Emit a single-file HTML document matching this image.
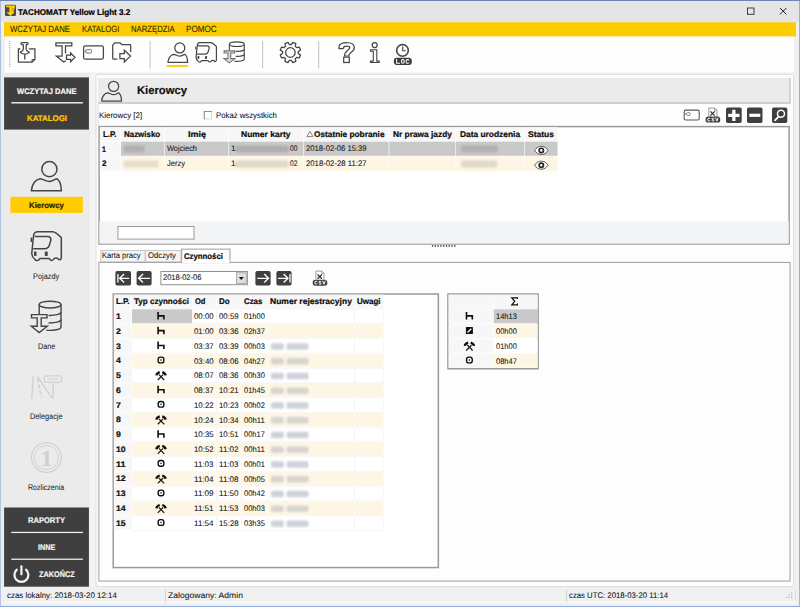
<!DOCTYPE html><html><head><meta charset="utf-8"><title>TACHOMATT Yellow Light 3.2</title><style>
html,body{margin:0;padding:0;}
body{width:800px;height:607px;overflow:hidden;background:#f0f0f0;font-family:"Liberation Sans",sans-serif;font-size:7.8px;color:#111;position:relative;}
.t{position:absolute;white-space:nowrap;line-height:14px;height:14px;-webkit-text-stroke:0.08px currentColor;}
.t.b{font-weight:bold;-webkit-text-stroke:0.22px currentColor;}
svg{position:absolute;overflow:visible;}
#ic,#tx{position:absolute;left:0;top:0;width:800px;height:607px;}

</style></head><body><svg style="left:0;top:0" width="800" height="607" viewBox="0 0 800 607"><rect x="0" y="0" width="800" height="607" fill="#f0f0f0"/><rect x="0" y="0" width="800" height="22.3" fill="#e5e5e5"/><rect x="0" y="0" width="800" height="1" fill="#6a86b8"/><rect x="0" y="1" width="0.9" height="606" fill="#a6bbdf"/><rect x="799.1" y="1" width="0.9" height="606" fill="#8fa9d8"/><rect x="0" y="605.9" width="800" height="1.1" fill="#8fa9d8"/><rect x="4" y="22.3" width="792" height="14.25" fill="#ffcc00"/><rect x="4.8" y="36.55" width="789.2" height="35.5" fill="#fefefe"/><rect x="9.3" y="41" width="1" height="0.95" fill="#8c8c8c"/><rect x="9.3" y="43.08" width="1" height="0.95" fill="#8c8c8c"/><rect x="9.3" y="45.16" width="1" height="0.95" fill="#8c8c8c"/><rect x="9.3" y="47.24" width="1" height="0.95" fill="#8c8c8c"/><rect x="9.3" y="49.32" width="1" height="0.95" fill="#8c8c8c"/><rect x="9.3" y="51.4" width="1" height="0.95" fill="#8c8c8c"/><rect x="9.3" y="53.48" width="1" height="0.95" fill="#8c8c8c"/><rect x="9.3" y="55.56" width="1" height="0.95" fill="#8c8c8c"/><rect x="9.3" y="57.64" width="1" height="0.95" fill="#8c8c8c"/><rect x="9.3" y="59.72" width="1" height="0.95" fill="#8c8c8c"/><rect x="9.3" y="61.8" width="1" height="0.95" fill="#8c8c8c"/><rect x="9.3" y="63.88" width="1" height="0.95" fill="#8c8c8c"/><rect x="9.3" y="65.96" width="1" height="0.95" fill="#8c8c8c"/><rect x="149.55" y="41" width="1.1" height="27.5" fill="#c6c6c6"/><rect x="262.05" y="41" width="1.1" height="27.5" fill="#c6c6c6"/><rect x="318.15" y="41" width="1.1" height="27.5" fill="#c6c6c6"/><rect x="4" y="72.05" width="790" height="1" fill="#f5f5f5"/><rect x="0.9" y="73" width="89.1" height="514.6" fill="#ecebeb"/><rect x="90" y="73" width="5.6" height="514.6" fill="#f3f3f3"/><rect x="4.1" y="77.4" width="84.8" height="52.2" fill="#3f3f3f"/><rect x="11.3" y="102.1" width="71.6" height="1.4" fill="#f4f4f4"/><rect x="10.4" y="196.8" width="72.4" height="16.1" fill="#ffcc00"/><rect x="4.1" y="507.5" width="84.8" height="79.2" fill="#3f3f3f"/><rect x="11.3" y="531.8" width="71.6" height="1.25" fill="#f4f4f4"/><rect x="11.3" y="558.6" width="71.6" height="1.25" fill="#f4f4f4"/><rect x="96" y="74.5" width="697.5" height="512" stroke="#dfdfdf" stroke-width="1" fill="#fdfdfd" rx="2"/><rect x="98" y="78" width="692.5" height="25.6" fill="#b2b2b2"/><rect x="98" y="78" width="691.5" height="24.5" fill="#ecebeb"/><rect x="97.7" y="104.5" width="1" height="21.5" fill="#dedede"/><rect x="204.3" y="111.5" width="7.2" height="7.4" stroke="#d6d6d6" stroke-width="1" fill="#fff"/><rect x="203.8" y="111" width="8.2" height="1" fill="#8f8f8f"/><rect x="203.8" y="111" width="1" height="8.4" fill="#8f8f8f"/><rect x="99.1" y="126.6" width="690" height="117.4" stroke="#9a9a9a" stroke-width="1.5" fill="#fff"/><rect x="99.4" y="221.3" width="689.3" height="22.3" fill="#f3f4f6"/><rect x="117.9" y="226.5" width="76.1" height="12.6" stroke="#9c9c9c" stroke-width="1" fill="#fff"/><rect x="99.9" y="127.1" width="20.4" height="14" fill="#f7f7f7"/><rect x="120.9" y="127.1" width="43.1" height="14" fill="#f7f7f7"/><rect x="164.6" y="127.1" width="63.4" height="14" fill="#f7f7f7"/><rect x="228.6" y="127.1" width="74.4" height="14" fill="#f7f7f7"/><rect x="303.6" y="127.1" width="85" height="14" fill="#f7f7f7"/><rect x="389.3" y="127.1" width="65.7" height="14" fill="#f7f7f7"/><rect x="455.6" y="127.1" width="68.4" height="14" fill="#f7f7f7"/><rect x="524.6" y="127.1" width="33" height="14" fill="#f7f7f7"/><path d="M309.900 131.300L312.900 136.600H306.900z" fill="none" stroke="#555" stroke-width="0.7"/><rect x="99.9" y="141.6" width="20.4" height="14.2" fill="#f7f7f7"/><rect x="120.9" y="141.6" width="43.1" height="14.2" fill="#c9c9c9"/><rect x="164.6" y="141.6" width="63.4" height="14.2" fill="#c9c9c9"/><rect x="228.6" y="141.6" width="74.4" height="14.2" fill="#c9c9c9"/><rect x="303.6" y="141.6" width="85" height="14.2" fill="#c9c9c9"/><rect x="389.3" y="141.6" width="65.7" height="14.2" fill="#c9c9c9"/><rect x="455.6" y="141.6" width="68.4" height="14.2" fill="#c9c9c9"/><rect x="524.6" y="141.6" width="33" height="14.2" fill="#c9c9c9"/><rect x="99.9" y="156.4" width="20.4" height="14.7" fill="#f7f7f7"/><rect x="120.9" y="156.4" width="43.1" height="14.7" fill="#fdf6e5"/><rect x="164.6" y="156.4" width="63.4" height="14.7" fill="#fdf6e5"/><rect x="228.6" y="156.4" width="74.4" height="14.7" fill="#fdf6e5"/><rect x="303.6" y="156.4" width="85" height="14.7" fill="#fdf6e5"/><rect x="389.3" y="156.4" width="65.7" height="14.7" fill="#fdf6e5"/><rect x="455.6" y="156.4" width="68.4" height="14.7" fill="#fdf6e5"/><rect x="524.6" y="156.4" width="33" height="14.7" fill="#fdf6e5"/><defs><filter id="bf" x="-10%" y="-40%" width="120%" height="180%"><feGaussianBlur stdDeviation="1.05"/></filter></defs><defs><pattern id="p1" x="0" y="0" width="4.300" height="10" patternUnits="userSpaceOnUse"><rect width="4.300" height="10" fill="#b8b8b8"/><rect width="2.200" height="10" fill="#aaaaaa"/></pattern></defs><rect x="123.5" y="145.5" width="21" height="7" rx="2" fill="url(#p1)" filter="url(#bf)"/><defs><pattern id="p2" x="0" y="0" width="4.300" height="10" patternUnits="userSpaceOnUse"><rect width="4.300" height="10" fill="#eae4d2"/><rect width="2.200" height="10" fill="#e0dbc9"/></pattern></defs><rect x="123.5" y="160.5" width="35" height="7" rx="2" fill="url(#p2)" filter="url(#bf)"/><defs><pattern id="p3" x="0" y="0" width="4.300" height="10" patternUnits="userSpaceOnUse"><rect width="4.300" height="10" fill="#b6b6b6"/><rect width="2.200" height="10" fill="#a8a8a8"/></pattern></defs><rect x="235" y="145.5" width="54" height="7" rx="2" fill="url(#p3)" filter="url(#bf)"/><defs><pattern id="p4" x="0" y="0" width="4.300" height="10" patternUnits="userSpaceOnUse"><rect width="4.300" height="10" fill="#e4dfce"/><rect width="2.200" height="10" fill="#d8d4c4"/></pattern></defs><rect x="235" y="160.5" width="54" height="7" rx="2" fill="url(#p4)" filter="url(#bf)"/><rect x="461" y="145.5" width="37" height="7" rx="2" fill="url(#p1)" filter="url(#bf)"/><rect x="461" y="160.5" width="36" height="7" rx="2" fill="url(#p4)" filter="url(#bf)"/><rect x="431.9" y="245.2" width="1.4" height="1.5" fill="#3a3a3a"/><rect x="434.68" y="245.2" width="1.4" height="1.5" fill="#3a3a3a"/><rect x="437.46" y="245.2" width="1.4" height="1.5" fill="#3a3a3a"/><rect x="440.24" y="245.2" width="1.4" height="1.5" fill="#3a3a3a"/><rect x="443.02" y="245.2" width="1.4" height="1.5" fill="#3a3a3a"/><rect x="445.8" y="245.2" width="1.4" height="1.5" fill="#3a3a3a"/><rect x="448.58" y="245.2" width="1.4" height="1.5" fill="#3a3a3a"/><rect x="451.36" y="245.2" width="1.4" height="1.5" fill="#3a3a3a"/><rect x="454.14" y="245.2" width="1.4" height="1.5" fill="#3a3a3a"/><rect x="98.85" y="262.45" width="691.2" height="318.6" stroke="#a6a6a6" stroke-width="1.1" fill="#fdfdfd"/><rect x="100.9" y="250.5" width="44.2" height="11.4" stroke="#c6c6c6" stroke-width="1" fill="#f5f5f5"/><rect x="145.6" y="250.5" width="35.4" height="11.4" stroke="#c6c6c6" stroke-width="1" fill="#f5f5f5"/><rect x="100.4" y="261.9" width="90" height="1.1" fill="#a6a6a6"/><rect x="181.65" y="249.15" width="48.3" height="13.5" stroke="#a6a6a6" stroke-width="1.1" fill="#fdfdfd"/><rect x="182.2" y="260" width="47.2" height="3.4" fill="#fdfdfd"/><rect x="160.9" y="271.5" width="86.5" height="13.2" stroke="#919191" stroke-width="1" fill="#fff"/><rect x="236.5" y="272.7" width="9.7" height="10.8" stroke="#adadad" stroke-width="1" fill="#dfdfdf"/><path d="M238.800 276.900h5L241.300 279.900z" fill="#111"/><rect x="113.25" y="294.05" width="325.1" height="273.5" stroke="#9a9a9a" stroke-width="1.5" fill="#fff"/><rect x="113.8" y="294.6" width="17.7" height="14.2" fill="#f7f7f7"/><rect x="132" y="294.6" width="60" height="14.2" fill="#f7f7f7"/><rect x="192.5" y="294.6" width="24.1" height="14.2" fill="#f7f7f7"/><rect x="217.1" y="294.6" width="24.5" height="14.2" fill="#f7f7f7"/><rect x="242.1" y="294.6" width="24.9" height="14.2" fill="#f7f7f7"/><rect x="267.5" y="294.6" width="87" height="14.2" fill="#f7f7f7"/><rect x="355" y="294.6" width="28.5" height="14.2" fill="#f7f7f7"/><rect x="113.8" y="309.3" width="17.7" height="13.97" fill="#f7f7f7"/><rect x="132" y="309.3" width="60" height="13.97" fill="#c9c9c9"/><rect x="192.05" y="308.85" width="25" height="14.87" fill="#f0f0f0"/><rect x="192.5" y="309.3" width="24.1" height="13.97" fill="#fff"/><rect x="216.65" y="308.85" width="25.4" height="14.87" fill="#f0f0f0"/><rect x="217.1" y="309.3" width="24.5" height="13.97" fill="#fff"/><rect x="241.65" y="308.85" width="25.8" height="14.87" fill="#f0f0f0"/><rect x="242.1" y="309.3" width="24.9" height="13.97" fill="#fff"/><rect x="267.05" y="308.85" width="87.9" height="14.87" fill="#f0f0f0"/><rect x="267.5" y="309.3" width="87" height="13.97" fill="#fff"/><rect x="354.55" y="308.85" width="29.4" height="14.87" fill="#f0f0f0"/><rect x="355" y="309.3" width="28.5" height="13.97" fill="#fff"/><rect x="113.8" y="324.07" width="17.7" height="13.97" fill="#f7f7f7"/><rect x="132" y="324.07" width="60" height="13.97" fill="#fdf6e5"/><rect x="192.5" y="324.07" width="24.1" height="13.97" fill="#fdf6e5"/><rect x="217.1" y="324.07" width="24.5" height="13.97" fill="#fdf6e5"/><rect x="242.1" y="324.07" width="24.9" height="13.97" fill="#fdf6e5"/><rect x="267.5" y="324.07" width="87" height="13.97" fill="#fdf6e5"/><rect x="355" y="324.07" width="28.5" height="13.97" fill="#fdf6e5"/><rect x="113.8" y="338.84" width="17.7" height="13.97" fill="#f7f7f7"/><rect x="131.55" y="338.39" width="60.9" height="14.87" fill="#f0f0f0"/><rect x="132" y="338.84" width="60" height="13.97" fill="#fff"/><rect x="192.05" y="338.39" width="25" height="14.87" fill="#f0f0f0"/><rect x="192.5" y="338.84" width="24.1" height="13.97" fill="#fff"/><rect x="216.65" y="338.39" width="25.4" height="14.87" fill="#f0f0f0"/><rect x="217.1" y="338.84" width="24.5" height="13.97" fill="#fff"/><rect x="241.65" y="338.39" width="25.8" height="14.87" fill="#f0f0f0"/><rect x="242.1" y="338.84" width="24.9" height="13.97" fill="#fff"/><rect x="267.05" y="338.39" width="87.9" height="14.87" fill="#f0f0f0"/><rect x="267.5" y="338.84" width="87" height="13.97" fill="#fff"/><rect x="354.55" y="338.39" width="29.4" height="14.87" fill="#f0f0f0"/><rect x="355" y="338.84" width="28.5" height="13.97" fill="#fff"/><defs><pattern id="p5" x="0" y="0" width="4.300" height="10" patternUnits="userSpaceOnUse"><rect width="4.300" height="10" fill="#d6d8de"/><rect width="2.200" height="10" fill="#c9ccd4"/></pattern></defs><rect x="271" y="343.14" width="13" height="6.5" rx="2" fill="url(#p5)" filter="url(#bf)"/><rect x="286.5" y="343.14" width="22" height="6.5" rx="2" fill="url(#p5)" filter="url(#bf)"/><rect x="113.8" y="353.61" width="17.7" height="13.97" fill="#f7f7f7"/><rect x="132" y="353.61" width="60" height="13.97" fill="#fdf6e5"/><rect x="192.5" y="353.61" width="24.1" height="13.97" fill="#fdf6e5"/><rect x="217.1" y="353.61" width="24.5" height="13.97" fill="#fdf6e5"/><rect x="242.1" y="353.61" width="24.9" height="13.97" fill="#fdf6e5"/><rect x="267.5" y="353.61" width="87" height="13.97" fill="#fdf6e5"/><rect x="355" y="353.61" width="28.5" height="13.97" fill="#fdf6e5"/><defs><pattern id="p6" x="0" y="0" width="4.300" height="10" patternUnits="userSpaceOnUse"><rect width="4.300" height="10" fill="#dddad3"/><rect width="2.200" height="10" fill="#d2d0cd"/></pattern></defs><rect x="271" y="357.91" width="13" height="6.5" rx="2" fill="url(#p6)" filter="url(#bf)"/><rect x="286.5" y="357.91" width="22" height="6.5" rx="2" fill="url(#p6)" filter="url(#bf)"/><rect x="113.8" y="368.38" width="17.7" height="13.97" fill="#f7f7f7"/><rect x="131.55" y="367.93" width="60.9" height="14.87" fill="#f0f0f0"/><rect x="132" y="368.38" width="60" height="13.97" fill="#fff"/><rect x="192.05" y="367.93" width="25" height="14.87" fill="#f0f0f0"/><rect x="192.5" y="368.38" width="24.1" height="13.97" fill="#fff"/><rect x="216.65" y="367.93" width="25.4" height="14.87" fill="#f0f0f0"/><rect x="217.1" y="368.38" width="24.5" height="13.97" fill="#fff"/><rect x="241.65" y="367.93" width="25.8" height="14.87" fill="#f0f0f0"/><rect x="242.1" y="368.38" width="24.9" height="13.97" fill="#fff"/><rect x="267.05" y="367.93" width="87.9" height="14.87" fill="#f0f0f0"/><rect x="267.5" y="368.38" width="87" height="13.97" fill="#fff"/><rect x="354.55" y="367.93" width="29.4" height="14.87" fill="#f0f0f0"/><rect x="355" y="368.38" width="28.5" height="13.97" fill="#fff"/><rect x="271" y="372.68" width="13" height="6.5" rx="2" fill="url(#p5)" filter="url(#bf)"/><rect x="286.5" y="372.68" width="22" height="6.5" rx="2" fill="url(#p5)" filter="url(#bf)"/><rect x="113.8" y="383.15" width="17.7" height="13.97" fill="#f7f7f7"/><rect x="132" y="383.15" width="60" height="13.97" fill="#fdf6e5"/><rect x="192.5" y="383.15" width="24.1" height="13.97" fill="#fdf6e5"/><rect x="217.1" y="383.15" width="24.5" height="13.97" fill="#fdf6e5"/><rect x="242.1" y="383.15" width="24.9" height="13.97" fill="#fdf6e5"/><rect x="267.5" y="383.15" width="87" height="13.97" fill="#fdf6e5"/><rect x="355" y="383.15" width="28.5" height="13.97" fill="#fdf6e5"/><rect x="271" y="387.45" width="13" height="6.5" rx="2" fill="url(#p6)" filter="url(#bf)"/><rect x="286.5" y="387.45" width="22" height="6.5" rx="2" fill="url(#p6)" filter="url(#bf)"/><rect x="113.8" y="397.92" width="17.7" height="13.97" fill="#f7f7f7"/><rect x="131.55" y="397.47" width="60.9" height="14.87" fill="#f0f0f0"/><rect x="132" y="397.92" width="60" height="13.97" fill="#fff"/><rect x="192.05" y="397.47" width="25" height="14.87" fill="#f0f0f0"/><rect x="192.5" y="397.92" width="24.1" height="13.97" fill="#fff"/><rect x="216.65" y="397.47" width="25.4" height="14.87" fill="#f0f0f0"/><rect x="217.1" y="397.92" width="24.5" height="13.97" fill="#fff"/><rect x="241.65" y="397.47" width="25.8" height="14.87" fill="#f0f0f0"/><rect x="242.1" y="397.92" width="24.9" height="13.97" fill="#fff"/><rect x="267.05" y="397.47" width="87.9" height="14.87" fill="#f0f0f0"/><rect x="267.5" y="397.92" width="87" height="13.97" fill="#fff"/><rect x="354.55" y="397.47" width="29.4" height="14.87" fill="#f0f0f0"/><rect x="355" y="397.92" width="28.5" height="13.97" fill="#fff"/><rect x="271" y="402.22" width="13" height="6.5" rx="2" fill="url(#p5)" filter="url(#bf)"/><rect x="286.5" y="402.22" width="22" height="6.5" rx="2" fill="url(#p5)" filter="url(#bf)"/><rect x="113.8" y="412.69" width="17.7" height="13.97" fill="#f7f7f7"/><rect x="132" y="412.69" width="60" height="13.97" fill="#fdf6e5"/><rect x="192.5" y="412.69" width="24.1" height="13.97" fill="#fdf6e5"/><rect x="217.1" y="412.69" width="24.5" height="13.97" fill="#fdf6e5"/><rect x="242.1" y="412.69" width="24.9" height="13.97" fill="#fdf6e5"/><rect x="267.5" y="412.69" width="87" height="13.97" fill="#fdf6e5"/><rect x="355" y="412.69" width="28.5" height="13.97" fill="#fdf6e5"/><rect x="271" y="416.99" width="13" height="6.5" rx="2" fill="url(#p6)" filter="url(#bf)"/><rect x="286.5" y="416.99" width="22" height="6.5" rx="2" fill="url(#p6)" filter="url(#bf)"/><rect x="113.8" y="427.46" width="17.7" height="13.97" fill="#f7f7f7"/><rect x="131.55" y="427.01" width="60.9" height="14.87" fill="#f0f0f0"/><rect x="132" y="427.46" width="60" height="13.97" fill="#fff"/><rect x="192.05" y="427.01" width="25" height="14.87" fill="#f0f0f0"/><rect x="192.5" y="427.46" width="24.1" height="13.97" fill="#fff"/><rect x="216.65" y="427.01" width="25.4" height="14.87" fill="#f0f0f0"/><rect x="217.1" y="427.46" width="24.5" height="13.97" fill="#fff"/><rect x="241.65" y="427.01" width="25.8" height="14.87" fill="#f0f0f0"/><rect x="242.1" y="427.46" width="24.9" height="13.97" fill="#fff"/><rect x="267.05" y="427.01" width="87.9" height="14.87" fill="#f0f0f0"/><rect x="267.5" y="427.46" width="87" height="13.97" fill="#fff"/><rect x="354.55" y="427.01" width="29.4" height="14.87" fill="#f0f0f0"/><rect x="355" y="427.46" width="28.5" height="13.97" fill="#fff"/><rect x="271" y="431.76" width="13" height="6.5" rx="2" fill="url(#p5)" filter="url(#bf)"/><rect x="286.5" y="431.76" width="22" height="6.5" rx="2" fill="url(#p5)" filter="url(#bf)"/><rect x="113.8" y="442.23" width="17.7" height="13.97" fill="#f7f7f7"/><rect x="132" y="442.23" width="60" height="13.97" fill="#fdf6e5"/><rect x="192.5" y="442.23" width="24.1" height="13.97" fill="#fdf6e5"/><rect x="217.1" y="442.23" width="24.5" height="13.97" fill="#fdf6e5"/><rect x="242.1" y="442.23" width="24.9" height="13.97" fill="#fdf6e5"/><rect x="267.5" y="442.23" width="87" height="13.97" fill="#fdf6e5"/><rect x="355" y="442.23" width="28.5" height="13.97" fill="#fdf6e5"/><rect x="271" y="446.53" width="13" height="6.5" rx="2" fill="url(#p6)" filter="url(#bf)"/><rect x="286.5" y="446.53" width="22" height="6.5" rx="2" fill="url(#p6)" filter="url(#bf)"/><rect x="113.8" y="457" width="17.7" height="13.97" fill="#f7f7f7"/><rect x="131.55" y="456.55" width="60.9" height="14.87" fill="#f0f0f0"/><rect x="132" y="457" width="60" height="13.97" fill="#fff"/><rect x="192.05" y="456.55" width="25" height="14.87" fill="#f0f0f0"/><rect x="192.5" y="457" width="24.1" height="13.97" fill="#fff"/><rect x="216.65" y="456.55" width="25.4" height="14.87" fill="#f0f0f0"/><rect x="217.1" y="457" width="24.5" height="13.97" fill="#fff"/><rect x="241.65" y="456.55" width="25.8" height="14.87" fill="#f0f0f0"/><rect x="242.1" y="457" width="24.9" height="13.97" fill="#fff"/><rect x="267.05" y="456.55" width="87.9" height="14.87" fill="#f0f0f0"/><rect x="267.5" y="457" width="87" height="13.97" fill="#fff"/><rect x="354.55" y="456.55" width="29.4" height="14.87" fill="#f0f0f0"/><rect x="355" y="457" width="28.5" height="13.97" fill="#fff"/><rect x="271" y="461.3" width="13" height="6.5" rx="2" fill="url(#p5)" filter="url(#bf)"/><rect x="286.5" y="461.3" width="22" height="6.5" rx="2" fill="url(#p5)" filter="url(#bf)"/><rect x="113.8" y="471.77" width="17.7" height="13.97" fill="#f7f7f7"/><rect x="132" y="471.77" width="60" height="13.97" fill="#fdf6e5"/><rect x="192.5" y="471.77" width="24.1" height="13.97" fill="#fdf6e5"/><rect x="217.1" y="471.77" width="24.5" height="13.97" fill="#fdf6e5"/><rect x="242.1" y="471.77" width="24.9" height="13.97" fill="#fdf6e5"/><rect x="267.5" y="471.77" width="87" height="13.97" fill="#fdf6e5"/><rect x="355" y="471.77" width="28.5" height="13.97" fill="#fdf6e5"/><rect x="271" y="476.07" width="13" height="6.5" rx="2" fill="url(#p6)" filter="url(#bf)"/><rect x="286.5" y="476.07" width="22" height="6.5" rx="2" fill="url(#p6)" filter="url(#bf)"/><rect x="113.8" y="486.54" width="17.7" height="13.97" fill="#f7f7f7"/><rect x="131.55" y="486.09" width="60.9" height="14.87" fill="#f0f0f0"/><rect x="132" y="486.54" width="60" height="13.97" fill="#fff"/><rect x="192.05" y="486.09" width="25" height="14.87" fill="#f0f0f0"/><rect x="192.5" y="486.54" width="24.1" height="13.97" fill="#fff"/><rect x="216.65" y="486.09" width="25.4" height="14.87" fill="#f0f0f0"/><rect x="217.1" y="486.54" width="24.5" height="13.97" fill="#fff"/><rect x="241.65" y="486.09" width="25.8" height="14.87" fill="#f0f0f0"/><rect x="242.1" y="486.54" width="24.9" height="13.97" fill="#fff"/><rect x="267.05" y="486.09" width="87.9" height="14.87" fill="#f0f0f0"/><rect x="267.5" y="486.54" width="87" height="13.97" fill="#fff"/><rect x="354.55" y="486.09" width="29.4" height="14.87" fill="#f0f0f0"/><rect x="355" y="486.54" width="28.5" height="13.97" fill="#fff"/><rect x="271" y="490.84" width="13" height="6.5" rx="2" fill="url(#p5)" filter="url(#bf)"/><rect x="286.5" y="490.84" width="22" height="6.5" rx="2" fill="url(#p5)" filter="url(#bf)"/><rect x="113.8" y="501.31" width="17.7" height="13.97" fill="#f7f7f7"/><rect x="132" y="501.31" width="60" height="13.97" fill="#fdf6e5"/><rect x="192.5" y="501.31" width="24.1" height="13.97" fill="#fdf6e5"/><rect x="217.1" y="501.31" width="24.5" height="13.97" fill="#fdf6e5"/><rect x="242.1" y="501.31" width="24.9" height="13.97" fill="#fdf6e5"/><rect x="267.5" y="501.31" width="87" height="13.97" fill="#fdf6e5"/><rect x="355" y="501.31" width="28.5" height="13.97" fill="#fdf6e5"/><rect x="271" y="505.61" width="13" height="6.5" rx="2" fill="url(#p6)" filter="url(#bf)"/><rect x="286.5" y="505.61" width="22" height="6.5" rx="2" fill="url(#p6)" filter="url(#bf)"/><rect x="113.8" y="516.08" width="17.7" height="13.97" fill="#f7f7f7"/><rect x="131.55" y="515.63" width="60.9" height="14.87" fill="#f0f0f0"/><rect x="132" y="516.08" width="60" height="13.97" fill="#fff"/><rect x="192.05" y="515.63" width="25" height="14.87" fill="#f0f0f0"/><rect x="192.5" y="516.08" width="24.1" height="13.97" fill="#fff"/><rect x="216.65" y="515.63" width="25.4" height="14.87" fill="#f0f0f0"/><rect x="217.1" y="516.08" width="24.5" height="13.97" fill="#fff"/><rect x="241.65" y="515.63" width="25.8" height="14.87" fill="#f0f0f0"/><rect x="242.1" y="516.08" width="24.9" height="13.97" fill="#fff"/><rect x="267.05" y="515.63" width="87.9" height="14.87" fill="#f0f0f0"/><rect x="267.5" y="516.08" width="87" height="13.97" fill="#fff"/><rect x="354.55" y="515.63" width="29.4" height="14.87" fill="#f0f0f0"/><rect x="355" y="516.08" width="28.5" height="13.97" fill="#fff"/><rect x="271" y="520.38" width="13" height="6.5" rx="2" fill="url(#p5)" filter="url(#bf)"/><rect x="286.5" y="520.38" width="22" height="6.5" rx="2" fill="url(#p5)" filter="url(#bf)"/><rect x="447.95" y="294.05" width="90.2" height="74.7" stroke="#9a9a9a" stroke-width="1.5" fill="#fff"/><rect x="448.5" y="294.6" width="44.7" height="14.2" fill="#f7f7f7"/><rect x="493.7" y="294.6" width="44" height="14.2" fill="#f7f7f7"/><rect x="448.5" y="309.3" width="44.7" height="13.97" fill="#f7f7f7"/><rect x="493.7" y="309.3" width="44" height="13.97" fill="#c9c9c9"/><rect x="448.5" y="324.07" width="44.7" height="13.97" fill="#f7f7f7"/><rect x="493.7" y="324.07" width="44" height="13.97" fill="#fdf6e5"/><rect x="448.5" y="338.84" width="44.7" height="13.97" fill="#f7f7f7"/><rect x="493.7" y="338.84" width="44" height="13.97" fill="#fff"/><rect x="448.5" y="353.61" width="44.7" height="13.97" fill="#f7f7f7"/><rect x="493.7" y="353.61" width="44" height="13.97" fill="#fdf6e5"/><rect x="0.9" y="587.6" width="798.2" height="18.3" fill="#f0f0f0"/><rect x="4" y="601.5" width="792" height="1.3" fill="#fbfbfb"/><rect x="165" y="589.5" width="1" height="12.5" fill="#d2d2d2"/><rect x="566" y="589.5" width="1" height="12.5" fill="#d2d2d2"/><rect x="795" y="590" width="0.9" height="10.5" fill="#d8d8d8"/></svg><div id="ic"><svg style="left:5px;top:4px" width="12" height="13" viewBox="5 4 12 13"><g transform="translate(5 4.8)"><rect x="0" y="0" width="11" height="11.200" rx="1.300" fill="#4a4a4e"/><path d="M1 0.800H10V2.500H9.700L9.500 4.200L8.700 4.700L8.800 7.400H9.600L5.500 11.100L1.400 7.400H4.300V2.500H1Z" fill="#ffcc00"/><path d="M7.100 3V6.800" stroke="#c9a000" stroke-width="0.7" fill="none"/><circle cx="7.800" cy="3.500" r="0.500" fill="#8a7420"/></g></svg><svg style="left:740px;top:0px" width="60" height="22" viewBox="0 0 60 22"><rect x="7.500" y="8" width="6.500" height="6.300" fill="none" stroke="#2a2a2a" stroke-width="0.9"/><path d="M40 8l6.400 6.400M46.400 8l-6.400 6.400" stroke="#222" stroke-width="1" fill="none"/></svg><svg style="left:0px;top:0px" width="800" height="76" viewBox="0 0 800 76"><path d="M20.300 48.900H18.400V62.200H32L34.900 59.500V48.900H28.800" fill="none" stroke="#454545" stroke-width="1.25"/><path d="M32 62.200V59.600H34.900" fill="none" stroke="#454545" stroke-width="1"/><path d="M21.700 42.600H27.200Q28.100 42.600 28.100 43.600Q28.100 44.700 27 44.700H26.200V49.600Q26.500 50.800 29.300 52.400Q27.400 54.200 24.750 54.200Q22.100 54.200 20.200 52.400Q23 50.800 23.300 49.600V44.700H22.400Q21 44.700 21 43.600Q21 42.600 21.700 42.600Z" fill="#fefefe" stroke="#454545" stroke-width="1.25" stroke-linejoin="round"/><path d="M24.750 54.500V59.600" stroke="#454545" stroke-width="1.300"/><path d="M65.500 53.200V45.900H71.800V42.900H55.900V45.900H62.100V56.100H56.300L63.700 62L65.800 60.700" fill="none" stroke="#454545" stroke-width="1.25" stroke-linejoin="miter"/><path d="M66.500 55.200H70.600V53L75 57.300L70.600 61.700V59.400H66.500Z" fill="#fefefe" stroke="#454545" stroke-width="1.25" stroke-linejoin="miter"/><rect x="83.600" y="45.900" width="19.800" height="13.300" rx="1.800" fill="none" stroke="#454545" stroke-width="1.25"/><rect x="85.900" y="49.600" width="5.600" height="3.500" rx="0.9" fill="none" stroke="#707070" stroke-width="1"/><path d="M84.600 51.350H85.900" stroke="#707070" stroke-width="1"/><path d="M117.300 59.200H113.700Q112.700 59.200 112.700 58.200V45.200L114.700 42.800H120.200L121.700 44.700H129.900Q130.700 44.700 130.700 45.500V52" fill="none" stroke="#454545" stroke-width="1.25" stroke-linejoin="round"/><path d="M119.900 53.700H124.300V50.300L130.500 56.100L124.300 62V58.500H119.900Z" fill="#fefefe" stroke="#454545" stroke-width="1.25" stroke-linejoin="miter"/><circle cx="179.795" cy="47.9443" r="5.00803" fill="none" stroke="#454545" stroke-width="1.25"/><path d="M167.958 62.2852C168.481 57.7705 170.116 55.1148 173.713 54.318C176.002 54.4508 177.31 56.1107 179.795 56.1107C182.214 56.1107 183.195 54.4508 184.83 54.318C186.792 55.4467 187.446 58.4344 187.642 62.2852Z" fill="none" stroke="#454545" stroke-width="1.25" stroke-linejoin="round"/><rect x="166.600" y="65" width="21.500" height="1.900" fill="#ffcc00"/><path d="M199.732 42.5724L210.419 42.5724Q212.487 42.5724 216.417 46.4864L216.417 59.9832Q216.417 61.5353 214.9 61.5353Q213.521 59.6458 211.453 60.658Q210.074 63.3574 208.006 60.658L201.8 60.658Q199.732 63.3574 198.008 60.9954Q196.077 59.6458 196.077 56.9464L197.181 46.149Q197.318 42.7748 199.732 42.5724Z" fill="none" stroke="#454545" stroke-width="1.2" stroke-linejoin="round"/><path d="M198.008 45.8116L207.316 45.8116Q209.385 46.0141 209.247 48.1735L208.212 51.5477Q207.661 53.9096 204.903 54.1121L197.043 54.1121" fill="none" stroke="#454545" stroke-width="1.2" stroke-linejoin="round"/><rect x="195.25" y="46.4864" width="1.10318" height="3.03676" rx="0.5" fill="#454545"/><rect x="197.594" y="56.0016" width="1.72373" height="2.9018" rx="0.4" fill="#454545"/><rect x="205.041" y="56.0016" width="1.99952" height="2.9018" rx="0.4" fill="#454545"/><ellipse cx="236.807" cy="44.1667" rx="7.45131" ry="2.26667" fill="none" stroke="#454545" stroke-width="1.1"/><path d="M229.356 44.1667L229.356 50.3667" stroke="#454545" stroke-width="1.1" fill="none"/><path d="M244.258 44.1667L244.258 59.1667A7.45131 2.26667 0 0 1 234.346 61.2333" stroke="#454545" stroke-width="1.1" fill="none"/><path d="M244.258 49.1667A7.45131 2.26667 0 0 1 235.713 51.3667" stroke="#454545" stroke-width="1.1" fill="none"/><path d="M244.258 54.1667A7.45131 2.26667 0 0 1 235.713 56.3667" stroke="#454545" stroke-width="1.1" fill="none"/><path d="M224.092 50.8333H234.688V53.0333H230.723V58.6333H234.893L229.356 62.8333L223.955 58.6333H227.988V53.0333H224.092Z" fill="#dedede" stroke="#727272" stroke-width="1.1" stroke-linejoin="miter"/><path d="M291.37 44.66L292.80 42.38L295.86 43.65L295.26 46.27L296.63 47.64L299.25 47.04L300.52 50.10L298.24 51.53L298.24 53.47L300.52 54.90L299.25 57.96L296.63 57.36L295.26 58.73L295.86 61.35L292.80 62.62L291.37 60.34L289.43 60.34L288.00 62.62L284.94 61.35L285.54 58.73L284.17 57.36L281.55 57.96L280.28 54.90L282.56 53.47L282.56 51.53L280.28 50.10L281.55 47.04L284.17 47.64L285.54 46.27L284.94 43.65L288.00 42.38L289.43 44.66Z" fill="none" stroke="#454545" stroke-width="1.25" stroke-linejoin="round"/><circle cx="290.4" cy="52.5" r="4.784" fill="none" stroke="#454545" stroke-width="1.25"/><path d="M339 48.500V46.500Q339.800 42.500 346.500 42.500Q354.300 42.700 354.300 47.500Q354.300 50.300 351 52.500Q348.800 54 348.800 56.200H344.600Q344.400 53 347 51Q349.800 49 349.800 47.600Q349.800 46.200 346.600 46.200Q343.500 46.200 343.200 48.500Z" fill="#fefefe" stroke="#454545" stroke-width="1.25" stroke-linejoin="round"/><rect x="343.700" y="57.200" width="5.600" height="5.300" fill="#fefefe" stroke="#454545" stroke-width="1.25"/><rect x="344.400" y="56.200" width="4.400" height="1.200" fill="#8a8a8a"/><circle cx="374.700" cy="45" r="2.500" fill="#fefefe" stroke="#454545" stroke-width="1.25"/><path d="M370.500 49.800H376.800V61.100H379.200V62.500H370.500V61.100H373.300V51.300H370.500Z" fill="#fefefe" stroke="#454545" stroke-width="1.1" stroke-linejoin="miter"/><circle cx="402.500" cy="50.400" r="5.800" fill="#fefefe" stroke="#454545" stroke-width="1.600"/><path d="M402.700 46.500V50.800H405.700" fill="none" stroke="#454545" stroke-width="1.100"/><rect x="393.900" y="57.800" width="17.900" height="7.100" rx="3" fill="#3c3c3c"/><path d="M396.625 59.1V63.275H400" fill="none" stroke="#fff" stroke-width="1.05" stroke-linejoin="round"/><ellipse cx="402.8" cy="61.45" rx="1.425" ry="1.825" fill="none" stroke="#fff" stroke-width="1.05"/><path d="M408.975 60.51Q408.975 59.625 407.55 59.625Q406.125 59.625 406.125 60.745V62.155Q406.125 63.275 407.55 63.275Q408.975 63.275 408.975 62.39" fill="none" stroke="#fff" stroke-width="1.05" stroke-linejoin="round"/></svg><svg style="left:0px;top:0px" width="800" height="607" viewBox="0 0 800 607"><circle cx="49.4" cy="169.2" r="7.6" fill="none" stroke="#454545" stroke-width="1.5"/><path d="M31.3 190.8C32.1 184 34.6 180 40.1 178.8C43.6 179 45.6 181.5 49.4 181.5C53.1 181.5 54.6 179 57.1 178.8C60.1 180.5 61.1 185 61.4 190.8Z" fill="none" stroke="#454545" stroke-width="1.5" stroke-linejoin="round"/><path d="M37.1 231.7L52.6 231.7Q55.6 231.7 61.3 237.5L61.3 257.5Q61.3 259.8 59.1 259.8Q57.1 257 54.1 258.5Q52.1 262.5 49.1 258.5L40.1 258.5Q37.1 262.5 34.6 259Q31.8 257 31.8 253L33.4 237Q33.6 232 37.1 231.7Z" fill="none" stroke="#454545" stroke-width="1.5" stroke-linejoin="round"/><path d="M34.6 236.5L48.1 236.5Q51.1 236.8 50.9 240L49.4 245Q48.6 248.5 44.6 248.8L33.2 248.8" fill="none" stroke="#454545" stroke-width="1.5" stroke-linejoin="round"/><rect x="30.6" y="237.5" width="1.6" height="4.5" rx="0.5" fill="#454545"/><rect x="34" y="251.6" width="2.5" height="4.3" rx="0.4" fill="#454545"/><rect x="44.8" y="251.6" width="2.9" height="4.3" rx="0.4" fill="#454545"/><ellipse cx="50.1" cy="304.6" rx="10.9" ry="3.4" fill="none" stroke="#454545" stroke-width="1.4"/><path d="M39.2 304.6L39.2 313.9" stroke="#454545" stroke-width="1.4" fill="none"/><path d="M61 304.6L61 327.1A10.9 3.4 0 0 1 46.5 330.2" stroke="#454545" stroke-width="1.4" fill="none"/><path d="M61 312.1A10.9 3.4 0 0 1 48.5 315.4" stroke="#454545" stroke-width="1.4" fill="none"/><path d="M61 319.6A10.9 3.4 0 0 1 48.5 322.9" stroke="#454545" stroke-width="1.4" fill="none"/><path d="M31.5 314.6H47V317.9H41.2V326.3H47.3L39.2 332.6L31.3 326.3H37.2V317.9H31.5Z" fill="none" stroke="#454545" stroke-width="1.4" stroke-linejoin="miter"/><path d="M33.300 375.800L31.700 398.800" stroke="#d2d2d2" stroke-width="1.500" fill="none"/><path d="M37 375.800L52.500 398.600" stroke="#d2d2d2" stroke-width="1.500" fill="none"/><path d="M37.500 378.500L41.500 397.500" stroke="#d2d2d2" stroke-width="1.800" stroke-dasharray="4 2.200" fill="none"/><path d="M53.200 382.500V398.800" stroke="#d2d2d2" stroke-width="1.500" fill="none"/><rect x="44.300" y="375.800" width="17.200" height="6.400" rx="1.200" fill="#ecebeb" stroke="#d2d2d2" stroke-width="1.200"/><path d="M47.500 379H58" stroke="#d2d2d2" stroke-width="1" fill="none"/><circle cx="46.400" cy="457.500" r="14.900" fill="none" stroke="#d2d2d2" stroke-width="1.200"/><circle cx="46.400" cy="457.500" r="12.100" fill="none" stroke="#d2d2d2" stroke-width="1"/><text x="46.500" y="465.600" font-family="Liberation Serif, serif" font-weight="bold" font-size="23.500" fill="#d0d0d0" text-anchor="middle">1</text><path d="M16.800 569.600A7 7 0 1 0 26 569.600" fill="none" stroke="#f6f6f6" stroke-width="2.200" stroke-linecap="round"/><path d="M21.400 566.400V574.300" stroke="#f6f6f6" stroke-width="2.200" stroke-linecap="round"/></svg><div class="t b" style="left:29.3px;top:198.7px;font-size:8.1px;color:#2b2500;transform:scaleX(0.9690) rotate(0.03deg);transform-origin:0 50%;">Kierowcy</div><div class="t" style="left:32.5px;top:269.5px;font-size:8.1px;color:#2a2a2a;transform:scaleX(0.9092) rotate(0.03deg);transform-origin:0 50%;">Pojazdy</div><div class="t" style="left:37.5px;top:339.8px;font-size:8.1px;color:#2a2a2a;transform:scaleX(0.8882) rotate(0.03deg);transform-origin:0 50%;">Dane</div><div class="t" style="left:29.8px;top:409.9px;font-size:8.1px;color:#2a2a2a;transform:scaleX(0.9022) rotate(0.03deg);transform-origin:0 50%;">Delegacje</div><div class="t" style="left:27.6px;top:480.8px;font-size:8.1px;color:#2a2a2a;transform:scaleX(0.8740) rotate(0.03deg);transform-origin:0 50%;">Rozliczenia</div><div class="t b" style="left:28.3px;top:514.3px;font-size:8.1px;color:#f4f4f4;transform:scaleX(0.9343) rotate(0.03deg);transform-origin:0 50%;">RAPORTY</div><div class="t b" style="left:38px;top:541.2px;font-size:8.1px;color:#f4f4f4;transform:scaleX(0.8939) rotate(0.03deg);transform-origin:0 50%;">INNE</div><div class="t b" style="left:39.3px;top:567.8px;font-size:8.1px;color:#f4f4f4;transform:scaleX(0.9016) rotate(0.03deg);transform-origin:0 50%;">ZAKOŃCZ</div><svg style="left:0px;top:0px" width="800" height="110" viewBox="0 0 800 110"><circle cx="113.614" cy="86.3652" r="5.08822" fill="none" stroke="#454545" stroke-width="1.25"/><path d="M101.662 101.025C102.19 96.4098 103.841 93.6951 107.473 92.8807C109.784 93.0164 111.105 94.7131 113.614 94.7131C116.057 94.7131 117.048 93.0164 118.698 92.8807C120.679 94.0344 121.34 97.0885 121.538 101.025Z" fill="none" stroke="#454545" stroke-width="1.25" stroke-linejoin="round"/></svg><svg style="left:0px;top:0px" width="800" height="140" viewBox="0 0 800 140"><rect x="684.200" y="110.150" width="15" height="9.900" rx="1.500" fill="#fff" stroke="#585858" stroke-width="1.100"/><rect x="686.600" y="112.700" width="3.700" height="2.800" rx="1.100" fill="none" stroke="#6a6a6a" stroke-width="0.8"/><path d="M684.800 114.100H686.600" stroke="#6a6a6a" stroke-width="0.8"/><g transform="translate(705.5 107.2)"><path d="M3.300 9.400V0.800H9.200L11.400 3.200V9.400" fill="#fff" stroke="#858585" stroke-width="0.8"/><path d="M9.200 0.800V3.200H11.400" fill="none" stroke="#858585" stroke-width="0.7"/><path d="M4.900 4.200L9.300 8.400M9.300 4.200L4.900 8.400" stroke="#2e2e2e" stroke-width="1.200"/><rect x="0.100" y="9.400" width="14.600" height="6" rx="2.600" fill="#3c3c3c"/><path d="M4.55 11.62Q4.55 10.95 3.4 10.95Q2.25 10.95 2.25 11.815V12.985Q2.25 13.85 3.4 13.85Q4.55 13.85 4.55 13.18" fill="none" stroke="#fff" stroke-width="1" stroke-linejoin="round"/><path d="M8.55 11.464Q8.55 10.95 7.4 10.95Q6.25 10.95 6.25 11.542Q6.25 12.244 7.4 12.4Q8.55 12.556 8.55 13.258Q8.55 13.85 7.4 13.85Q6.25 13.85 6.25 13.336" fill="none" stroke="#fff" stroke-width="1" stroke-linejoin="round"/><path d="M10.05 10.45L11.4 13.95L12.75 10.45" fill="none" stroke="#fff" stroke-width="1" stroke-linejoin="round"/></g><rect x="726" y="107.5" width="15.7" height="15.5" rx="1.800" fill="#3f3f3f"/><path d="M732.200 109.800h3.300v4h4v3.300h-4v4h-3.300v-4h-4v-3.300h4z" fill="#fdfdfd"/><rect x="747" y="107.5" width="15.5" height="15.5" rx="1.800" fill="#3f3f3f"/><rect x="749.300" y="113.700" width="11" height="3.200" fill="#fdfdfd"/><rect x="772" y="107.5" width="15.3" height="15.5" rx="1.800" fill="#3f3f3f"/><circle cx="781" cy="113.800" r="3.500" fill="none" stroke="#fdfdfd" stroke-width="1.500"/><path d="M778.500 116.600L775 120.300" stroke="#fdfdfd" stroke-width="1.800" stroke-linecap="round"/></svg><svg style="left:533px;top:143px" width="17" height="15" viewBox="533 143 17 15"><path d="M534.6 150.4C537.7 145 544.9 145 548 150.4C544.9 155.8 537.7 155.8 534.6 150.4Z" fill="#fff" stroke="#3a3a3a" stroke-width="0.8"/><circle cx="541.3" cy="150.4" r="2.150" fill="#fff" stroke="#222" stroke-width="1.700"/></svg><svg style="left:533px;top:158px" width="17" height="15" viewBox="533 158 17 15"><path d="M534.6 165.2C537.7 159.8 544.9 159.8 548 165.2C544.9 170.6 537.7 170.6 534.6 165.2Z" fill="#fff" stroke="#3a3a3a" stroke-width="0.8"/><circle cx="541.3" cy="165.2" r="2.150" fill="#fff" stroke="#222" stroke-width="1.700"/></svg><svg style="left:0px;top:0px" width="800" height="300" viewBox="0 0 800 300"><rect x="115.4" y="271" width="15.6" height="14.6" rx="1.800" fill="#3f3f3f"/><path d="M117.900 274V282.600" stroke="#fdfdfd" stroke-width="1.300"/><path d="M129.2 278.300H119.9M124.1 274L119.7 278.300L124.1 282.600" fill="none" stroke="#fdfdfd" stroke-width="1.350"/><rect x="136.6" y="271" width="15" height="14.6" rx="1.800" fill="#3f3f3f"/><path d="M150 278.300H138.8M143 274L138.6 278.300L143 282.600" fill="none" stroke="#fdfdfd" stroke-width="1.350"/><rect x="255.4" y="271" width="15.2" height="14.6" rx="1.800" fill="#3f3f3f"/><path d="M257.3 278.300H268.4M264.2 274L268.6 278.300L264.2 282.600" fill="none" stroke="#fdfdfd" stroke-width="1.350"/><rect x="276.4" y="271" width="15.2" height="14.6" rx="1.800" fill="#3f3f3f"/><path d="M290 274V282.600" stroke="#fdfdfd" stroke-width="1.300"/><path d="M278 278.300H287.8M283.6 274L288 278.300L283.6 282.600" fill="none" stroke="#fdfdfd" stroke-width="1.350"/><g transform="translate(312.6 270.3)"><path d="M3.300 9.400V0.800H9.200L11.400 3.200V9.400" fill="#fff" stroke="#858585" stroke-width="0.8"/><path d="M9.200 0.800V3.200H11.400" fill="none" stroke="#858585" stroke-width="0.7"/><path d="M4.900 4.200L9.300 8.400M9.300 4.200L4.900 8.400" stroke="#2e2e2e" stroke-width="1.200"/><rect x="0.100" y="9.400" width="14.600" height="6" rx="2.600" fill="#3c3c3c"/><path d="M4.55 11.62Q4.55 10.95 3.4 10.95Q2.25 10.95 2.25 11.815V12.985Q2.25 13.85 3.4 13.85Q4.55 13.85 4.55 13.18" fill="none" stroke="#fff" stroke-width="1" stroke-linejoin="round"/><path d="M8.55 11.464Q8.55 10.95 7.4 10.95Q6.25 10.95 6.25 11.542Q6.25 12.244 7.4 12.4Q8.55 12.556 8.55 13.258Q8.55 13.85 7.4 13.85Q6.25 13.85 6.25 13.336" fill="none" stroke="#fff" stroke-width="1" stroke-linejoin="round"/><path d="M10.05 10.45L11.4 13.95L12.75 10.45" fill="none" stroke="#fff" stroke-width="1" stroke-linejoin="round"/></g></svg><svg style="left:153px;top:308px" width="16" height="17" viewBox="153 308 16 17"><path d="M158.1 312V319.5M158.1 315.9H163.9V319.5" fill="none" stroke="#0d0d0d" stroke-width="1.600"/></svg><svg style="left:153px;top:323px" width="16" height="17" viewBox="153 323 16 17"><path d="M158.1 326.77V334.27M158.1 330.67H163.9V334.27" fill="none" stroke="#0d0d0d" stroke-width="1.600"/></svg><svg style="left:153px;top:337px" width="16" height="17" viewBox="153 337 16 17"><path d="M158.1 341.54V349.04M158.1 345.44H163.9V349.04" fill="none" stroke="#0d0d0d" stroke-width="1.600"/></svg><svg style="left:153px;top:352px" width="16" height="17" viewBox="153 352 16 17"><rect x="158.15" y="357.16" width="5.700" height="5.700" rx="2.200" fill="none" stroke="#0d0d0d" stroke-width="1.400"/><rect x="160.3" y="359.31" width="1.400" height="1.400" fill="#222"/></svg><svg style="left:153px;top:367px" width="16" height="17" viewBox="153 367 16 17"><path d="M157.8 379.98L163.1 374.58M164.2 379.98L158.9 374.58" stroke="#1a1a1a" stroke-width="1.250" fill="none"/><path d="M156.4 375.38Q156.7 373.08 159.7 372.08" stroke="#0d0d0d" stroke-width="2.300" fill="none"/><path d="M165.6 375.38Q165.3 373.08 162.3 372.08" stroke="#0d0d0d" stroke-width="2.300" fill="none"/></svg><svg style="left:153px;top:382px" width="16" height="17" viewBox="153 382 16 17"><path d="M158.1 385.85V393.35M158.1 389.75H163.9V393.35" fill="none" stroke="#0d0d0d" stroke-width="1.600"/></svg><svg style="left:153px;top:397px" width="16" height="17" viewBox="153 397 16 17"><rect x="158.15" y="401.47" width="5.700" height="5.700" rx="2.200" fill="none" stroke="#0d0d0d" stroke-width="1.400"/><rect x="160.3" y="403.62" width="1.400" height="1.400" fill="#222"/></svg><svg style="left:153px;top:412px" width="16" height="17" viewBox="153 412 16 17"><path d="M157.8 424.29L163.1 418.89M164.2 424.29L158.9 418.89" stroke="#1a1a1a" stroke-width="1.250" fill="none"/><path d="M156.4 419.69Q156.7 417.39 159.7 416.39" stroke="#0d0d0d" stroke-width="2.300" fill="none"/><path d="M165.6 419.69Q165.3 417.39 162.3 416.39" stroke="#0d0d0d" stroke-width="2.300" fill="none"/></svg><svg style="left:153px;top:426px" width="16" height="17" viewBox="153 426 16 17"><path d="M158.1 430.16V437.66M158.1 434.06H163.9V437.66" fill="none" stroke="#0d0d0d" stroke-width="1.600"/></svg><svg style="left:153px;top:441px" width="16" height="17" viewBox="153 441 16 17"><path d="M157.8 453.83L163.1 448.43M164.2 453.83L158.9 448.43" stroke="#1a1a1a" stroke-width="1.250" fill="none"/><path d="M156.4 449.23Q156.7 446.93 159.7 445.93" stroke="#0d0d0d" stroke-width="2.300" fill="none"/><path d="M165.6 449.23Q165.3 446.93 162.3 445.93" stroke="#0d0d0d" stroke-width="2.300" fill="none"/></svg><svg style="left:153px;top:456px" width="16" height="17" viewBox="153 456 16 17"><rect x="158.15" y="460.55" width="5.700" height="5.700" rx="2.200" fill="none" stroke="#0d0d0d" stroke-width="1.400"/><rect x="160.3" y="462.7" width="1.400" height="1.400" fill="#222"/></svg><svg style="left:153px;top:471px" width="16" height="17" viewBox="153 471 16 17"><path d="M157.8 483.37L163.1 477.97M164.2 483.37L158.9 477.97" stroke="#1a1a1a" stroke-width="1.250" fill="none"/><path d="M156.4 478.77Q156.7 476.47 159.7 475.47" stroke="#0d0d0d" stroke-width="2.300" fill="none"/><path d="M165.6 478.77Q165.3 476.47 162.3 475.47" stroke="#0d0d0d" stroke-width="2.300" fill="none"/></svg><svg style="left:153px;top:485px" width="16" height="17" viewBox="153 485 16 17"><rect x="158.15" y="490.09" width="5.700" height="5.700" rx="2.200" fill="none" stroke="#0d0d0d" stroke-width="1.400"/><rect x="160.3" y="492.24" width="1.400" height="1.400" fill="#222"/></svg><svg style="left:153px;top:500px" width="16" height="17" viewBox="153 500 16 17"><path d="M157.8 512.91L163.1 507.51M164.2 512.91L158.9 507.51" stroke="#1a1a1a" stroke-width="1.250" fill="none"/><path d="M156.4 508.31Q156.7 506.01 159.7 505.01" stroke="#0d0d0d" stroke-width="2.300" fill="none"/><path d="M165.6 508.31Q165.3 506.01 162.3 505.01" stroke="#0d0d0d" stroke-width="2.300" fill="none"/></svg><svg style="left:153px;top:515px" width="16" height="17" viewBox="153 515 16 17"><rect x="158.15" y="519.63" width="5.700" height="5.700" rx="2.200" fill="none" stroke="#0d0d0d" stroke-width="1.400"/><rect x="160.3" y="521.78" width="1.400" height="1.400" fill="#222"/></svg><svg style="left:506px;top:293px" width="17" height="17" viewBox="506 293 17 17"><path d="M517.3 299V297.8H511.8L514.7 301.3L511.8 304.9H517.4V303.6" fill="none" stroke="#111" stroke-width="1.250" stroke-linejoin="miter"/></svg><svg style="left:461px;top:308px" width="17" height="17" viewBox="461 308 17 17"><path d="M466.5 312V319.5M466.5 315.9H472.3V319.5" fill="none" stroke="#0d0d0d" stroke-width="1.600"/></svg><svg style="left:461px;top:323px" width="17" height="17" viewBox="461 323 17 17"><rect x="465.9" y="327.07" width="7" height="7" rx="0.6" fill="#0d0d0d"/><path d="M467.5 332.47L471.3 328.67" stroke="#fff" stroke-width="1.300"/></svg><svg style="left:461px;top:338px" width="17" height="17" viewBox="461 338 17 17"><path d="M466.2 350.44L471.5 345.04M472.6 350.44L467.3 345.04" stroke="#1a1a1a" stroke-width="1.250" fill="none"/><path d="M464.8 345.84Q465.1 343.54 468.1 342.54" stroke="#0d0d0d" stroke-width="2.300" fill="none"/><path d="M474 345.84Q473.7 343.54 470.7 342.54" stroke="#0d0d0d" stroke-width="2.300" fill="none"/></svg><svg style="left:461px;top:352px" width="17" height="17" viewBox="461 352 17 17"><rect x="466.55" y="357.16" width="5.700" height="5.700" rx="2.200" fill="none" stroke="#0d0d0d" stroke-width="1.400"/><rect x="468.7" y="359.31" width="1.400" height="1.400" fill="#222"/></svg><svg style="left:780px;top:588px" width="20" height="14" viewBox="780 588 20 14"><rect x="791" y="596.7" width="1.300" height="1.300" fill="#c2c2c2"/><rect x="788.7" y="596.7" width="1.300" height="1.300" fill="#c2c2c2"/><rect x="786.4" y="596.7" width="1.300" height="1.300" fill="#c2c2c2"/><rect x="791" y="594.4" width="1.300" height="1.300" fill="#c2c2c2"/><rect x="788.7" y="594.4" width="1.300" height="1.300" fill="#c2c2c2"/><rect x="791" y="592.1" width="1.300" height="1.300" fill="#c2c2c2"/></svg></div><div id="tx"><div class="t b" style="left:18.3px;top:5.2px;font-size:8.4px;transform:scaleX(0.9604) rotate(0.03deg);transform-origin:0 50%;color:#000;">TACHOMATT Yellow Light 3.2</div><div class="t" style="left:10px;top:21.7px;font-size:9.1px;transform:scaleX(0.8559) rotate(0.03deg);transform-origin:0 50%;color:#2c2500;">WCZYTAJ DANE</div><div class="t" style="left:81.75px;top:21.7px;font-size:9.1px;transform:scaleX(0.8491) rotate(0.03deg);transform-origin:0 50%;color:#2c2500;">KATALOGI</div><div class="t" style="left:130.75px;top:21.7px;font-size:9.1px;transform:scaleX(0.8483) rotate(0.03deg);transform-origin:0 50%;color:#2c2500;">NARZĘDZIA</div><div class="t" style="left:186.25px;top:21.7px;font-size:9.1px;transform:scaleX(0.8944) rotate(0.03deg);transform-origin:0 50%;color:#2c2500;">POMOC</div><div class="t b" style="left:16.9px;top:84.8px;font-size:8.1px;transform:scaleX(0.9349) rotate(0.03deg);transform-origin:0 50%;color:#f4f4f4;">WCZYTAJ DANE</div><div class="t b" style="left:26.9px;top:111.6px;font-size:8.1px;transform:scaleX(0.9734) rotate(0.03deg);transform-origin:0 50%;color:#ffcc00;">KATALOGI</div><div class="t b" style="left:136.5px;top:83.3px;font-size:11.25px;transform:scaleX(0.9976) rotate(0.03deg);transform-origin:0 50%;color:#111;">Kierowcy</div><div class="t" style="left:98.7px;top:108.6px;font-size:8.1px;transform:scaleX(0.9792) rotate(0.03deg);transform-origin:0 50%;color:#151515;">Kierowcy [2]</div><div class="t" style="left:216px;top:108.6px;font-size:8.1px;transform:scaleX(0.9595) rotate(0.03deg);transform-origin:0 50%;color:#151515;">Pokaż wszystkich</div><div class="t b" style="left:103.1px;top:128.1px;font-size:8.2px;transform:scaleX(0.9587) rotate(0.03deg);transform-origin:0 50%;color:#0c0c0c;">L.P.</div><div class="t b" style="left:124.4px;top:128.1px;font-size:8.2px;transform:scaleX(0.9687) rotate(0.03deg);transform-origin:0 50%;color:#0c0c0c;">Nazwisko</div><div class="t b" style="left:187.75px;top:128.1px;font-size:8.2px;transform:scaleX(1.1062) rotate(0.03deg);transform-origin:0 50%;color:#0c0c0c;">Imię</div><div class="t b" style="left:241px;top:128.1px;font-size:8.2px;transform:scaleX(1.0365) rotate(0.03deg);transform-origin:0 50%;color:#0c0c0c;">Numer karty</div><div class="t b" style="left:314.4px;top:128.1px;font-size:8.2px;transform:scaleX(1.0127) rotate(0.03deg);transform-origin:0 50%;color:#0c0c0c;">Ostatnie pobranie</div><div class="t b" style="left:392.9px;top:128.1px;font-size:8.2px;transform:scaleX(1.0194) rotate(0.03deg);transform-origin:0 50%;color:#0c0c0c;">Nr prawa jazdy</div><div class="t b" style="left:459.6px;top:128.1px;font-size:8.2px;transform:scaleX(1.0233) rotate(0.03deg);transform-origin:0 50%;color:#0c0c0c;">Data urodzenia</div><div class="t b" style="left:527.75px;top:128.1px;font-size:8.2px;transform:scaleX(1.0374) rotate(0.03deg);transform-origin:0 50%;color:#0c0c0c;">Status</div><div class="t b" style="left:102.4px;top:142.6px;font-size:8.1px;transform:scaleX(0.8657) rotate(0.03deg);transform-origin:0 50%;">1</div><div class="t b" style="left:102.4px;top:157.35px;font-size:8.1px;transform:scaleX(1.0020) rotate(0.03deg);transform-origin:0 50%;">2</div><div class="t" style="left:166.9px;top:142.4px;font-size:8.1px;transform:scaleX(0.9171) rotate(0.03deg);transform-origin:0 50%;color:#151515;">Wojciech</div><div class="t" style="left:166.9px;top:157.15px;font-size:8.1px;transform:scaleX(0.9353) rotate(0.03deg);transform-origin:0 50%;color:#151515;">Jerzy</div><div class="t" style="left:231px;top:142.4px;font-size:8.1px;transform:scaleX(1.0020) rotate(0.03deg);transform-origin:0 50%;color:#151515;">1</div><div class="t" style="left:231px;top:157.15px;font-size:8.1px;transform:scaleX(1.0020) rotate(0.03deg);transform-origin:0 50%;color:#151515;">1</div><div class="t" style="left:290px;top:142.4px;font-size:8.1px;transform:scaleX(0.8324) rotate(0.03deg);transform-origin:0 50%;color:#151515;">00</div><div class="t" style="left:290px;top:157.15px;font-size:8.1px;transform:scaleX(0.8324) rotate(0.03deg);transform-origin:0 50%;color:#151515;">02</div><div class="t" style="left:305.6px;top:142.4px;font-size:8.1px;transform:scaleX(0.9483) rotate(0.03deg);transform-origin:0 50%;color:#151515;">2018-02-06 15:39</div><div class="t" style="left:305.6px;top:157.15px;font-size:8.1px;transform:scaleX(0.9573) rotate(0.03deg);transform-origin:0 50%;color:#151515;">2018-02-28 11:27</div><div class="t" style="left:102.4px;top:248.6px;font-size:8.1px;transform:scaleX(0.9319) rotate(0.03deg);transform-origin:0 50%;color:#151515;">Karta pracy</div><div class="t" style="left:148px;top:248.6px;font-size:8.1px;transform:scaleX(0.9571) rotate(0.03deg);transform-origin:0 50%;color:#151515;">Odczyty</div><div class="t b" style="left:184px;top:249.8px;font-size:8.2px;transform:scaleX(0.9510) rotate(0.03deg);transform-origin:0 50%;color:#0c0c0c;">Czynności</div><div class="t" style="left:162.6px;top:271px;font-size:8.1px;transform:scaleX(0.9267) rotate(0.03deg);transform-origin:0 50%;color:#151515;">2018-02-06</div><div class="t b" style="left:116px;top:295px;font-size:8.2px;transform:scaleX(0.9730) rotate(0.03deg);transform-origin:0 50%;color:#0c0c0c;">L.P.</div><div class="t b" style="left:134.4px;top:295px;font-size:8.2px;transform:scaleX(0.9840) rotate(0.03deg);transform-origin:0 50%;color:#0c0c0c;">Typ czynności</div><div class="t b" style="left:194.6px;top:295px;font-size:8.2px;transform:scaleX(0.9133) rotate(0.03deg);transform-origin:0 50%;color:#0c0c0c;">Od</div><div class="t b" style="left:219.4px;top:295px;font-size:8.2px;transform:scaleX(0.9697) rotate(0.03deg);transform-origin:0 50%;color:#0c0c0c;">Do</div><div class="t b" style="left:243.6px;top:295px;font-size:8.2px;transform:scaleX(0.9612) rotate(0.03deg);transform-origin:0 50%;color:#0c0c0c;">Czas</div><div class="t b" style="left:270px;top:295px;font-size:8.2px;transform:scaleX(1.0399) rotate(0.03deg);transform-origin:0 50%;color:#0c0c0c;">Numer rejestracyjny</div><div class="t b" style="left:357.4px;top:295px;font-size:8.2px;transform:scaleX(0.9773) rotate(0.03deg);transform-origin:0 50%;color:#0c0c0c;">Uwagi</div><div class="t b" style="left:116.3px;top:310px;font-size:8.1px;transform:scaleX(1.0766) rotate(0.03deg);transform-origin:0 50%;">1</div><div class="t" style="left:194.4px;top:310.2px;font-size:8.1px;transform:scaleX(0.9669) rotate(0.03deg);transform-origin:0 50%;color:#151515;">00:00</div><div class="t" style="left:219px;top:310.2px;font-size:8.1px;transform:scaleX(0.9669) rotate(0.03deg);transform-origin:0 50%;color:#151515;">00:59</div><div class="t" style="left:243.6px;top:310.2px;font-size:8.1px;transform:scaleX(0.9234) rotate(0.03deg);transform-origin:0 50%;color:#151515;">01h00</div><div class="t b" style="left:116.3px;top:324.77px;font-size:8.1px;transform:scaleX(1.0766) rotate(0.03deg);transform-origin:0 50%;">2</div><div class="t" style="left:194.4px;top:324.97px;font-size:8.1px;transform:scaleX(0.9669) rotate(0.03deg);transform-origin:0 50%;color:#151515;">01:00</div><div class="t" style="left:219px;top:324.97px;font-size:8.1px;transform:scaleX(0.9669) rotate(0.03deg);transform-origin:0 50%;color:#151515;">03:36</div><div class="t" style="left:243.6px;top:324.97px;font-size:8.1px;transform:scaleX(0.9234) rotate(0.03deg);transform-origin:0 50%;color:#151515;">02h37</div><div class="t b" style="left:116.3px;top:339.54px;font-size:8.1px;transform:scaleX(1.0766) rotate(0.03deg);transform-origin:0 50%;">3</div><div class="t" style="left:194.4px;top:339.74px;font-size:8.1px;transform:scaleX(0.9669) rotate(0.03deg);transform-origin:0 50%;color:#151515;">03:37</div><div class="t" style="left:219px;top:339.74px;font-size:8.1px;transform:scaleX(0.9669) rotate(0.03deg);transform-origin:0 50%;color:#151515;">03:39</div><div class="t" style="left:243.6px;top:339.74px;font-size:8.1px;transform:scaleX(0.9234) rotate(0.03deg);transform-origin:0 50%;color:#151515;">00h03</div><div class="t b" style="left:116.3px;top:354.31px;font-size:8.1px;transform:scaleX(1.0766) rotate(0.03deg);transform-origin:0 50%;">4</div><div class="t" style="left:194.4px;top:354.51px;font-size:8.1px;transform:scaleX(0.9669) rotate(0.03deg);transform-origin:0 50%;color:#151515;">03:40</div><div class="t" style="left:219px;top:354.51px;font-size:8.1px;transform:scaleX(0.9669) rotate(0.03deg);transform-origin:0 50%;color:#151515;">08:06</div><div class="t" style="left:243.6px;top:354.51px;font-size:8.1px;transform:scaleX(0.9234) rotate(0.03deg);transform-origin:0 50%;color:#151515;">04h27</div><div class="t b" style="left:116.3px;top:369.08px;font-size:8.1px;transform:scaleX(1.0766) rotate(0.03deg);transform-origin:0 50%;">5</div><div class="t" style="left:194.4px;top:369.28px;font-size:8.1px;transform:scaleX(0.9669) rotate(0.03deg);transform-origin:0 50%;color:#151515;">08:07</div><div class="t" style="left:219px;top:369.28px;font-size:8.1px;transform:scaleX(0.9669) rotate(0.03deg);transform-origin:0 50%;color:#151515;">08:36</div><div class="t" style="left:243.6px;top:369.28px;font-size:8.1px;transform:scaleX(0.9234) rotate(0.03deg);transform-origin:0 50%;color:#151515;">00h30</div><div class="t b" style="left:116.3px;top:383.85px;font-size:8.1px;transform:scaleX(1.0766) rotate(0.03deg);transform-origin:0 50%;">6</div><div class="t" style="left:194.4px;top:384.05px;font-size:8.1px;transform:scaleX(0.9669) rotate(0.03deg);transform-origin:0 50%;color:#151515;">08:37</div><div class="t" style="left:219px;top:384.05px;font-size:8.1px;transform:scaleX(0.9669) rotate(0.03deg);transform-origin:0 50%;color:#151515;">10:21</div><div class="t" style="left:243.6px;top:384.05px;font-size:8.1px;transform:scaleX(0.9234) rotate(0.03deg);transform-origin:0 50%;color:#151515;">01h45</div><div class="t b" style="left:116.3px;top:398.62px;font-size:8.1px;transform:scaleX(1.0766) rotate(0.03deg);transform-origin:0 50%;">7</div><div class="t" style="left:194.4px;top:398.82px;font-size:8.1px;transform:scaleX(0.9669) rotate(0.03deg);transform-origin:0 50%;color:#151515;">10:22</div><div class="t" style="left:219px;top:398.82px;font-size:8.1px;transform:scaleX(0.9669) rotate(0.03deg);transform-origin:0 50%;color:#151515;">10:23</div><div class="t" style="left:243.6px;top:398.82px;font-size:8.1px;transform:scaleX(0.9234) rotate(0.03deg);transform-origin:0 50%;color:#151515;">00h02</div><div class="t b" style="left:116.3px;top:413.39px;font-size:8.1px;transform:scaleX(1.0766) rotate(0.03deg);transform-origin:0 50%;">8</div><div class="t" style="left:194.4px;top:413.59px;font-size:8.1px;transform:scaleX(0.9669) rotate(0.03deg);transform-origin:0 50%;color:#151515;">10:24</div><div class="t" style="left:219px;top:413.59px;font-size:8.1px;transform:scaleX(0.9669) rotate(0.03deg);transform-origin:0 50%;color:#151515;">10:34</div><div class="t" style="left:243.6px;top:413.59px;font-size:8.1px;transform:scaleX(0.9487) rotate(0.03deg);transform-origin:0 50%;color:#151515;">00h11</div><div class="t b" style="left:116.3px;top:428.16px;font-size:8.1px;transform:scaleX(1.0766) rotate(0.03deg);transform-origin:0 50%;">9</div><div class="t" style="left:194.4px;top:428.36px;font-size:8.1px;transform:scaleX(0.9669) rotate(0.03deg);transform-origin:0 50%;color:#151515;">10:35</div><div class="t" style="left:219px;top:428.36px;font-size:8.1px;transform:scaleX(0.9669) rotate(0.03deg);transform-origin:0 50%;color:#151515;">10:51</div><div class="t" style="left:243.6px;top:428.36px;font-size:8.1px;transform:scaleX(0.9234) rotate(0.03deg);transform-origin:0 50%;color:#151515;">00h17</div><div class="t b" style="left:116.3px;top:442.93px;font-size:8.1px;transform:scaleX(1.0766) rotate(0.03deg);transform-origin:0 50%;">10</div><div class="t" style="left:194.4px;top:443.13px;font-size:8.1px;transform:scaleX(0.9669) rotate(0.03deg);transform-origin:0 50%;color:#151515;">10:52</div><div class="t" style="left:219px;top:443.13px;font-size:8.1px;transform:scaleX(0.9965) rotate(0.03deg);transform-origin:0 50%;color:#151515;">11:02</div><div class="t" style="left:243.6px;top:443.13px;font-size:8.1px;transform:scaleX(0.9487) rotate(0.03deg);transform-origin:0 50%;color:#151515;">00h11</div><div class="t b" style="left:116.3px;top:457.7px;font-size:8.1px;transform:scaleX(1.1328) rotate(0.03deg);transform-origin:0 50%;">11</div><div class="t" style="left:194.4px;top:457.9px;font-size:8.1px;transform:scaleX(0.9965) rotate(0.03deg);transform-origin:0 50%;color:#151515;">11:03</div><div class="t" style="left:219px;top:457.9px;font-size:8.1px;transform:scaleX(0.9965) rotate(0.03deg);transform-origin:0 50%;color:#151515;">11:03</div><div class="t" style="left:243.6px;top:457.9px;font-size:8.1px;transform:scaleX(0.9234) rotate(0.03deg);transform-origin:0 50%;color:#151515;">00h01</div><div class="t b" style="left:116.3px;top:472.47px;font-size:8.1px;transform:scaleX(1.0766) rotate(0.03deg);transform-origin:0 50%;">12</div><div class="t" style="left:194.4px;top:472.67px;font-size:8.1px;transform:scaleX(0.9965) rotate(0.03deg);transform-origin:0 50%;color:#151515;">11:04</div><div class="t" style="left:219px;top:472.67px;font-size:8.1px;transform:scaleX(0.9965) rotate(0.03deg);transform-origin:0 50%;color:#151515;">11:08</div><div class="t" style="left:243.6px;top:472.67px;font-size:8.1px;transform:scaleX(0.9234) rotate(0.03deg);transform-origin:0 50%;color:#151515;">00h05</div><div class="t b" style="left:116.3px;top:487.24px;font-size:8.1px;transform:scaleX(1.0766) rotate(0.03deg);transform-origin:0 50%;">13</div><div class="t" style="left:194.4px;top:487.44px;font-size:8.1px;transform:scaleX(0.9965) rotate(0.03deg);transform-origin:0 50%;color:#151515;">11:09</div><div class="t" style="left:219px;top:487.44px;font-size:8.1px;transform:scaleX(0.9965) rotate(0.03deg);transform-origin:0 50%;color:#151515;">11:50</div><div class="t" style="left:243.6px;top:487.44px;font-size:8.1px;transform:scaleX(0.9234) rotate(0.03deg);transform-origin:0 50%;color:#151515;">00h42</div><div class="t b" style="left:116.3px;top:502.01px;font-size:8.1px;transform:scaleX(1.0766) rotate(0.03deg);transform-origin:0 50%;">14</div><div class="t" style="left:194.4px;top:502.21px;font-size:8.1px;transform:scaleX(0.9965) rotate(0.03deg);transform-origin:0 50%;color:#151515;">11:51</div><div class="t" style="left:219px;top:502.21px;font-size:8.1px;transform:scaleX(0.9965) rotate(0.03deg);transform-origin:0 50%;color:#151515;">11:53</div><div class="t" style="left:243.6px;top:502.21px;font-size:8.1px;transform:scaleX(0.9234) rotate(0.03deg);transform-origin:0 50%;color:#151515;">00h03</div><div class="t b" style="left:116.3px;top:516.78px;font-size:8.1px;transform:scaleX(1.0766) rotate(0.03deg);transform-origin:0 50%;">15</div><div class="t" style="left:194.4px;top:516.98px;font-size:8.1px;transform:scaleX(0.9965) rotate(0.03deg);transform-origin:0 50%;color:#151515;">11:54</div><div class="t" style="left:219px;top:516.98px;font-size:8.1px;transform:scaleX(0.9669) rotate(0.03deg);transform-origin:0 50%;color:#151515;">15:28</div><div class="t" style="left:243.6px;top:516.98px;font-size:8.1px;transform:scaleX(0.9234) rotate(0.03deg);transform-origin:0 50%;color:#151515;">03h35</div><div class="t" style="left:495.6px;top:310.2px;font-size:8.1px;transform:scaleX(0.9234) rotate(0.03deg);transform-origin:0 50%;color:#151515;">14h13</div><div class="t" style="left:495.6px;top:324.97px;font-size:8.1px;transform:scaleX(0.9234) rotate(0.03deg);transform-origin:0 50%;color:#151515;">00h00</div><div class="t" style="left:495.6px;top:339.74px;font-size:8.1px;transform:scaleX(0.9234) rotate(0.03deg);transform-origin:0 50%;color:#151515;">01h00</div><div class="t" style="left:495.6px;top:354.51px;font-size:8.1px;transform:scaleX(0.9234) rotate(0.03deg);transform-origin:0 50%;color:#151515;">08h47</div><div class="t" style="left:7.1px;top:588.6px;font-size:8.1px;transform:scaleX(0.9762) rotate(0.03deg);transform-origin:0 50%;color:#151515;">czas lokalny: 2018-03-20 12:14</div><div class="t" style="left:168px;top:588.6px;font-size:8.1px;transform:scaleX(1.0609) rotate(0.03deg);transform-origin:0 50%;color:#151515;">Zalogowany: Admin</div><div class="t" style="left:568.6px;top:588.6px;font-size:8.1px;transform:scaleX(0.9583) rotate(0.03deg);transform-origin:0 50%;color:#151515;">czas UTC: 2018-03-20 11:14</div></div></body></html>
